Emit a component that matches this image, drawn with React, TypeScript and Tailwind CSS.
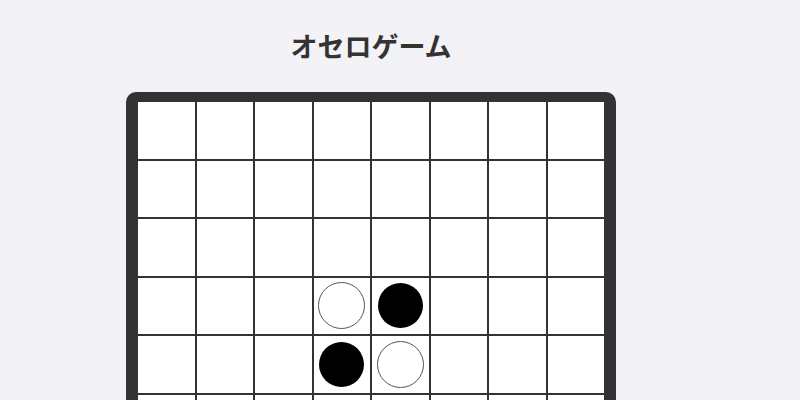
type Cell = 0 | 1 | 2; // 0 empty, 1 black, 2 white

const initialBoard = (): Cell[][] => {
  const b: Cell[][] = Array.from({ length: 8 }, () => Array<Cell>(8).fill(0));
  b[3][3] = 2;
  b[3][4] = 1;
  b[4][3] = 1;
  b[4][4] = 2;
  return b;
};

function Piece({ color }: { color: Cell }) {
  if (color === 1) {
    return <div className="w-[45px] h-[45px] rounded-full bg-black" />;
  }
  if (color === 2) {
    return <div className="w-[47px] h-[47px] rounded-full bg-white border-[1.5px] border-[#555]" />;
  }
  return null;
}

export default function App() {
  const board = initialBoard();

  return (
    <div
      className="min-h-screen bg-[#f2f2f7] pr-[58px] pt-[28px] flex flex-col items-center"
      style={{ fontFamily: '"Noto Sans CJK JP", "Noto Sans", sans-serif' }}
    >
      <h1 className="text-[27px] font-bold leading-[36px] text-[#333] mb-[28px]">オセロゲーム</h1>

      <div className="rounded-[10px] border-[10px] border-[#333] bg-[#333]">
        <div className="grid grid-cols-8 gap-[2px] px-[2px]">
          {board.map((row, r) =>
            row.map((cell, c) => (
              <div
                key={`${r}-${c}`}
                className="w-[56.5px] h-[56.5px] bg-white flex items-center justify-center"
              >
                <Piece color={cell} />
              </div>
            ))
          )}
        </div>
      </div>
    </div>
  );
}
